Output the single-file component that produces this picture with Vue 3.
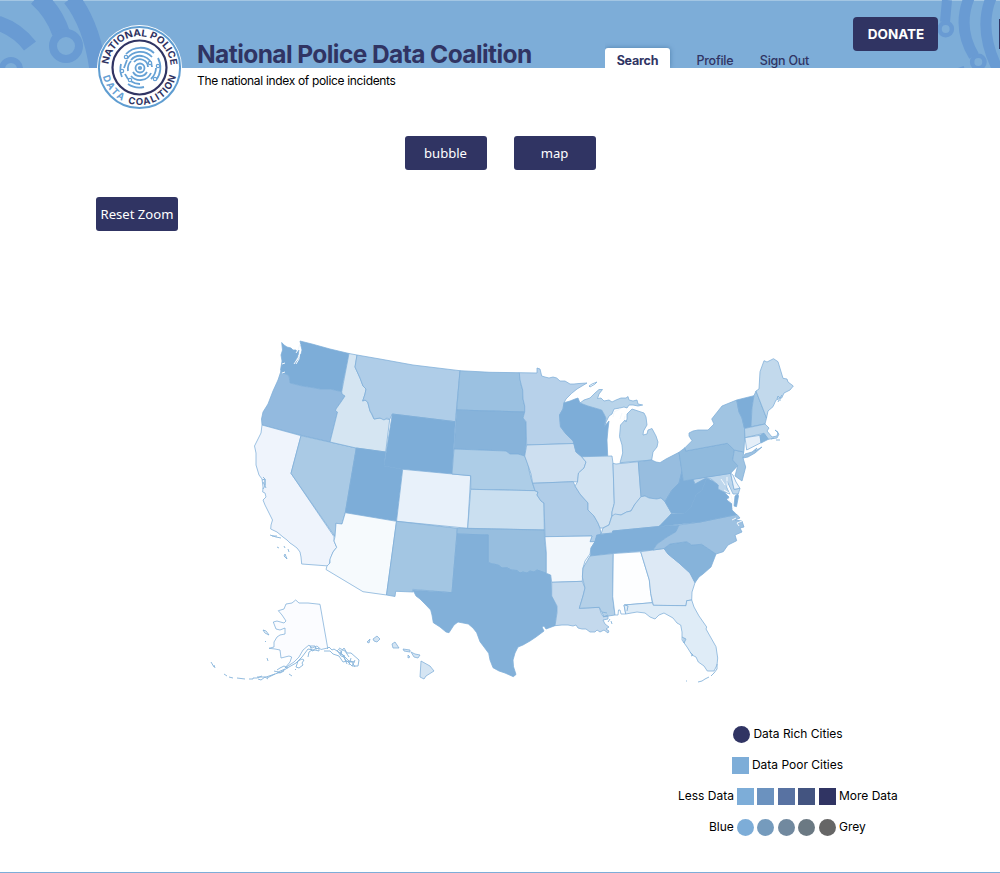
<script setup>
const states = [
  ['WA', '#7dadd8', '281.7,342.5 284,345 287,347 291,348 293,350 296,350 297,352 299,350 298,356 296,360 295,363 298,360 299,356 301,354 302,350 301,346 300,341 312,344 330,349 349,353.5 347,364 343,382 341.7,391.7 330,389 320,389 312,387.5 302,386 298,385 290,383 289,376 286,374 282,373 280.5,370 281,367 282,361 281,355 282.5,350'],
  ['OR', '#93badf', '282,373 286,374 289,376 290,383 298,385 302,386 312,387.5 320,389 330,389 341.7,391.7 342,394 345,396 341,402 336,409 335.5,411 337.5,412 336,418 330,442 300,435 262,425 261.5,419 263,412 268,404 273,391 278,380 281,371'],
  ['CA', '#eff4fc', '262,425 301,435.7 291,473.3 334,536.7 334,541 336.7,547.3 333,552 330,560 329,566 301.7,564 301,557 300,552 297,548 293,545 290,543 287,540 283,537 277,532 270.7,529 271,525 272.5,520 269,513 265,505 263,500 266,497 265,493 262.7,492 263,487 262,479 259,475 256,465 256,453 254.5,446 258,439 261,433'],
  ['NV', '#aacae5', '301,435.7 356.3,448 345.3,512.7 342,524 336,523.3 335,536.7 291,473.3'],
  ['ID', '#d5e5f2', '349,353.5 357,355 355,367 360,378 363,386 366,389 365,394 362.7,401 365,400 367.7,402 370,411 374,419 380,418 389.7,419.5 385.7,452 356,448 330,442 336,418 337.5,412 335.5,411 336,409 341,402 345,396 342,394 341.7,391.7'],
  ['MT', '#afcde8', '357,355 380,359 413,365 460,370.7 455.3,421.7 392.3,414 389.7,419.5 387,418 384,420 380,418 374,419 372,414 370,411 367.7,402 365,400 362.7,401 365,394 366,389 363,386 360,378 355,367'],
  ['WY', '#7dadd8', '392.3,414 455.3,421.7 452,474 402.7,469.3 384,466'],
  ['UT', '#7dadd8', '356.3,448 385.7,452 384,466 402.7,469.3 396.5,521.3 345.3,512.7'],
  ['CO', '#e8f1fa', '402.7,469.3 470.7,475.7 467.7,528.3 396.5,521.3'],
  ['AZ', '#f6fafd', '345.3,512.7 396.5,521.3 386.5,595 363,591.7 326,569.5 327,566 330,563 330,559 333,552 336.7,547.3 334,541 335,536.7 336,523.3 342,524'],
  ['NM', '#a3c6e3', '396.5,521.3 457.3,528.3 452,592.7 412.7,589.3 413.3,592 395.7,591.3 395,596.5 386.5,595'],
  ['ND', '#9bc1e1', '460,370.7 490,372.3 519.3,372.7 520,378 521,385 522.7,390 523,399 524.7,406 524.7,412 456.7,410'],
  ['SD', '#87b3da', '456.7,410 524.7,412 523,418 526,421.7 526,445 524.7,456 518,454 510,454 506,451 454,449'],
  ['NE', '#adcde7', '454,449 506,451 510,454 518,454 524.7,456 528,464 529,470 531.7,481 535,490.7 470.7,489.3 470.7,475.7 452,474'],
  ['KS', '#cadff0', '470.7,489.3 535,490.7 538,492 537,495 541,501 544,503 544.3,530 467.7,528.3'],
  ['OK', '#97bedf', '457.3,528.3 544.3,530 544.5,540 546.3,553 546.3,573.3 540,571 537,570 534,572 530,571 527,573 523,572 520,573 517,570.5 511,570 507,567.7 502,568 499,565.5 495,564.3 492,564 488.3,562.3 488.3,535 457,534'],
  ['TX', '#82b0d9', '457,534 488.3,535 488.3,562.3 492,564 495,564.3 499,565.5 502,568 507,567.7 511,570 517,570.5 520,573 523,572 527,573 530,571 534,572 537,570 540,571 546.3,573.3 550.7,575 551.7,596 554,600 557.5,608 556,617 555,625.7 546,629 544,626 542,627 544,631 536,637 530,641 523,645 518,647 515,653 513,660 513.5,666.7 516,674.5 513.3,676.7 505,673 499,671 493,667.7 490,660 488.7,653.3 484,647 480,641.7 476.7,632.7 473,628 468.3,624 458,622 454,625 449,632.7 446,632 440,627 433.3,622.7 432,615 430.7,610 425,604 420,599 416,596 413,590 452,592.7'],
  ['MN', '#b7d1ea', '519.3,372.7 537,373 537,368 540,369 541.7,376 545,377 549,378 553,377 556.7,378 560,381 565,381 570,384 574,384 579,383.5 587,383 577,389 571.7,393.3 566,399 564,402.7 563,409 559.5,415 560.5,426.7 566,434 573.3,440 574,443.5 526.7,445 526,421.7 523,418 524.7,412 524.7,406 523,399 522.7,390 520,380'],
  ['IA', '#cddff0', '526.7,445 574,443.5 576,452 581.7,456.7 586,462 584,468 578.5,473 577.5,482 573.3,481.7 532.7,483.3 531,474 529,468 524.7,456'],
  ['MO', '#b0cde8', '532.7,483.3 573.3,481.7 575,486 580,494 588,503 588,510 594,516 598,523 600,528 601,534 597,536 595,541.7 590,541.7 592,536 545,536.7 544,503 541,501 537,495 538,492 535,490.7'],
  ['AR', '#f2f7fc', '545,536.7 592,536 590,541.7 595,541.7 591,548 590,554 585,561 583,568 582.3,581.3 551.7,582.3 550.7,575 546.3,573.3 546.3,553'],
  ['LA', '#c4d9ed', '551.7,582.3 582.3,581.3 585,588 583,596 579.3,608.3 599.3,607.3 601,613 603,616.5 608,616 608,619 603,620 605,624 609,627 606,629 609,631 608,633 604,630 600,632 597,630 595,632 590,632 586,629 582,629 578,628 576,625 573,626 568,625 562,625 555,625.7 557,613 557,606 551.7,596'],
  ['WI', '#7dadd8', '564,402.7 570,401 575,399 578,398 580,403 588,406 601.7,410 604,414 606,418 604,426.7 609,421 608,429 607,440 607.7,455.7 581.7,456.7 576,452 573,441 566,434 560.5,426.7 559.5,415 563,409'],
  ['MI', '#b9d4ea', '580,403 584,400 590,398 595,393 599,389.5 602.5,389.5 599,394 597.5,398.5 601,398 604,401 609,400 612,402 616,400 621,398 626,398 628,396.5 629,400 633,401 637,400 638,404 642.7,405 638,406 633,405 629,405 627,408 624,407 620,408 614,409 612,414 609,416 606,422 604.5,426.5 606,418 604,414 601.7,410 588,406'],
  ['MIL', '#b9d4ea', '632,409 638,411 644,413 646,417 647,425 643.5,431 643,435 647,434 648,430 652,428.5 656,436 658,442 657,447 653,452 651.7,460 620,462.7 622.7,453 622,445 619.5,436.7 620.5,425 625,420 626,422 627,419 627,414'],
  ['IL', '#d2e3f2', '581.7,456.7 612,456 613,463.3 614.3,503.3 612,512 611.7,516 609,525 603,528 600,528 598,523 594,516 588,510 588,503 580,494 575,486 577.5,482 578.5,473 584,468 586,462'],
  ['IN', '#cddff0', '613,463.3 616,464 638.3,461.7 641,496.7 637,502 635,504 631,511 626.7,512 621,515 612,516 612,512 614.3,503.3'],
  ['OH', '#97bddf', '638.3,461.7 651.7,460 656,462 660,462.7 666,459 679,452.3 682,471 679,483 672,490 665,501.7 661,498 656.7,499 649,498 645,496 641,496.7'],
  ['KY', '#c8ddef', '641,496.7 645,496 649,498 656.7,499 661,498 665,501.7 671.7,513.3 666,522 659,526.5 612.7,531 612.7,533 601,534 603,528 609,525 612,516 615,514 621,515 626.7,512 631,511 635,504'],
  ['TN', '#80afd9', '596.7,535 612.7,533 612.7,531 659,526.5 679,525 676,531.7 667,537 657,544 653,550 613,553.3 590.5,556 591,548 595,541.7'],
  ['MS', '#b4d0e8', '590,556 613.3,553.5 612.7,596.7 615,615 604,616.7 599.3,607.3 579.3,608.3 583,596 585,588 582.3,577 583,568'],
  ['AL', '#fdfeff', '613.3,553.5 640.7,551.7 649.3,580 650.7,593.3 652.3,602.7 624,605 625.7,614 621,614 620,610 618.5,610 618,615 615,615 612.7,596.7'],
  ['GA', '#dde9f5', '640.7,551.7 664,548.5 668,554 679,563 690,573 695,582.7 692,592 691.7,600 686.7,600.7 686,605.7 653.3,605.3 650.7,593.3 649.3,580'],
  ['FL', '#dfecf7', '624,605 652.3,602.7 653.3,605.3 686,605.7 686.7,600.7 691.7,600 694,607 699,616 706.7,627 706,629 716,646.7 717.7,658 717,665 714,671 707.3,671 704,666 698.3,662 696,657 692,655 687,647 682,640 682,632 680.7,625 677,623 673,618 664,613 659,615 655,619 650,617 645,613 637,612 625.7,614'],
  ['SC', '#86b3da', '664,548.5 670,544 686.7,541.7 691.7,545 701.7,544.3 716,554 711,567 703,574 699,577 695,582.7 690,573 679,563 668,554'],
  ['NC', '#9dc1e1', '679,525 700,522 737,514.5 740,518 735,520 742,521 744,527 740,528 742,532 735,535 736.7,540.7 728,545 723.3,551.7 716,554 701.7,544.3 691.7,545 686.7,541.7 670,544 664,548.5 653,550 657,544 667,537 676,531.7'],
  ['VA', '#7dadd8', '706.7,478.3 713,481 718.3,485 718,489 724,492 729,497 727,500 732,504 732,510 736.7,514.5 700,522 659,526.5 671,514 685,513 691,507 696,495 702,490'],
  ['WV', '#7dadd8', '682,471 683.3,481 693,479 695,484 699,479 706.7,478.3 702,490 696,495 691,507 685,513 671.7,513.3 665,501.7 672,490 679,483'],
  ['MD', '#bdd6ec', '693,479 730.7,473.3 734,489.3 740,488.3 738.3,494 733,494 727,481 727,488 730,494 724,492 718,489 718.3,485 711,479 706,478 695,484'],
  ['VAE', '#7dadd8', '737.7,494 738.5,496 736.5,506.7 734,506 735,496'],
  ['DE', '#edf4fb', '730.7,473.3 733,475 736,482 740,488.3 734,489.3'],
  ['PA', '#90badd', '679,452.3 685,447.7 685.7,451 727.3,443.3 734.3,450 732.7,460 737.7,465.7 730.7,473.3 683.3,481'],
  ['NJ', '#a0c4e2', '734.3,450 743.7,452 743,458 745.7,467 742,481 735,476 737.7,465.7 732.7,460'],
  ['NY', '#a0c4e2', '685.7,451 685,447.7 692,440.7 689,436 689,433 693,431 698,430 708,430 714,424 711.7,419 722,406 736.7,400 739,412 742,418 744.5,428.5 744.5,440 744,450 743.7,452 734.3,450 727.3,443.3'],
  ['LI', '#9dc1e1', '743,458 745,454 752,452 757,448 755,451 762,447 755,453 748,457'],
  ['VT', '#7dadd8', '736.7,400 754,395.7 752,408 751,426.7 744.5,428.5 742,418 739,412'],
  ['NH', '#a4c7e4', '754,395.7 756,391 766.5,418 765,424 751,426.7 752,408'],
  ['ME', '#c2d9ec', '756,391 759,389 760,371.7 764,360.7 767,362 773.5,358.7 778,361.7 783,378.3 787,379 788,382 793.3,386 790,390 784,393 781.7,398 776,400 773,406.7 768,411 766.5,418'],
  ['MA', '#bad4ea', '744.5,428.5 765,424 769,428 767,431 772,437 777,436 778,432 775,430 779,434 777,438 768.3,439.3 764,433.3 745,437.7'],
  ['CT', '#e5eff9', '745,437.7 760,435.3 761,442.7 746.7,450'],
  ['RI', '#85b3da', '760,435.3 764,433.3 768.3,439.3 761,443'],
  ['AK', '#fbfcff', '286,604 292,603 295.7,600 299,603 308,603 320,604.3 327.7,648 321,649.5 317,646 312,648 309,645 303,650 299,657 294,662 285,668 290,662 291.7,657 289,656 285,657 281,658 280,650 275,649 269,648.3 274,647 274,642 277,637 280,635 285,634 285,628 280,630 276,629 273.3,622 277,621 284,623 286,621 282,615 278.3,610.7 284,609']
]
const isles = [
  'M327 649l2-2 3 3 2-1 6 4 4-5 3 5 4 0 8 7-1 6-6 0-5-5-4 1-4-6-6-2-3-3-6 0',
  'M337 650l4 6 3 1 2 4 6 1 3 5m-14-14l8 8 6 1m-12-7l4 9m4-6l-2 7m6-5-3 6m-13-18l6 3 4 6m-11-8 4 3-2 2 5 2',
  'M317 648l-4 2-5-1-6 8-6 6-7 4-8 5-15 5-9 0m31-9-4-2-4 2-3 2m0 2 3 1 4-2m5 3 3 2m-24 3-3-2-4 3-3-1m54-29-3 2-1 5',
  'M310 646l5 0 1 3 3-1 0 3-4-1-3 1zM297 664l1-3 4-2 2 1-2 3 1 2-4 3-3-1zM285 669l-7 3-4-1m1 3-8 4',
  'M262 676l-5 2-4 0 0 1-4 0m-4 0-8-1m-4 0-4-1m-5-3 3 2m-16-14 3 5m0-2 1 3m52-10 1 3m-3-20 1 1M263 630l3 1 3 4-4-2zM295 669l1 1',
  'M270 535l3 1 3 1 5 1m-4-2-5 0m5 11 2 1m5-2 1 2m3 1 1 3m-4 2 2 5-3-3z',
  'M262 480l3-1 0 7-2 3m0-7 3 6m-3-11 2 2 0 6',
  'M589 386l3-2 5-2-2 2-5 3z',
  'M777 399l1-3 2 2 2-3m-4 7 1-2 2 0M771 439l3-1m2 2 4 0',
  'M686 681l1 0m11 1 4-1 3-2 4-2m2-1 3-3 3-4 0-5',
  'M682 637l4 2-2 4 0-5m6 14 3 3-2 1M514 648l1 3m-4 4 2 13M603 617l5-2m2 4-2 3m3-1 1 3M625 605l3 1-1 5M602 612l5 1'
]
const inlets = [
  'M300 344l-2 6-2 3m4-1-1 5-3 4-2 3m5-9 0 4-3 5M282 364l3-1m-3 10 3-1',
  'M727 477l0 8 3 7 2 7 1 9m-9-18 5 3m-8-14 4 6M727 499l5 3',
  'M742 521l-5 2 2 3m-3-8-4 2M620 409l-6 3-1 5m9-4-2 6m5-3-1 4'
]
const hawaii = [
  '367,642 370,639 369,643', '373,639 377,636 380,639 377,642 374,641',
  '392,644 395,642 399,648 393,648', '403,649 410,650 410,652 404,651',
  '411,652 415,654 420,655 418,658 414,657', '408,655 410,657 408,658',
  '421,661 430,666 434,671 426,676 424,679 420,677'
]
const ramp = ['#7dadd8', '#6b92bf', '#5872a2', '#435480', '#303463']
const greys = ['#7dadd8', '#759bbd', '#71899f', '#6b7983', '#666666']
</script>

<template>
  <div class="page">
    <header class="banner">
      <svg class="circuits" viewBox="0 0 1000 68" width="1000" height="68" aria-hidden="true">
        <g fill="none" stroke="#699bd3" stroke-width="11">
          <path d="M-2 23Q18 30 30 46" stroke-width="15" />
          <path d="M37 -3Q54 12 61 33" stroke-width="18" />
          <circle cx="66" cy="46" r="13" stroke-width="8" />
          <path d="M71 -2Q92 25 98 70" stroke-width="17" />
          <circle cx="11" cy="69" r="9" stroke-width="6" />
          <path d="M947 0L945 22" stroke-width="10" />
          <circle cx="945.7" cy="29" r="6.2" stroke-width="4.5" />
          <path d="M969 -2Q957 28 974 56M991 -2Q978 30 998 70" />
          <circle cx="978.3" cy="62" r="6.2" stroke-width="4.5" />
          <path d="M955 70L964 67" stroke-width="2" />
        </g>
      </svg>
      <svg class="seal" viewBox="0 0 86 86" width="86" height="86" role="img">
        <circle cx="42.5" cy="42.5" r="42.5" fill="#fff" />
        <circle cx="42.5" cy="42.5" r="40.6" fill="none" stroke="#5f9dd1" stroke-width="2" />
        <circle cx="42.5" cy="42.5" r="27" fill="none" stroke="#303463" stroke-width="2.2" />
        <defs>
          <path id="arcTop" d="M12.5 51A31.2 31.2 0 1 1 72.5 51" />
          <path id="arcTurn" d="M4.9 42.5A37.6 37.6 0 0 0 80.1 42.5" />
        </defs>
        <text class="seal-text"><textPath href="#arcTop" startOffset="11.5" textLength="93" lengthAdjust="spacingAndGlyphs">NATIONAL POLICE</textPath></text>
        <text class="seal-text seal-light"><textPath href="#arcTurn" startOffset="9" textLength="32">DATA</textPath></text>
        <text class="seal-text"><textPath href="#arcTurn" startOffset="47" textLength="62">COALITION</textPath></text>
        <g fill="none" stroke="#65a1d5" stroke-width="1.8">
          <path d="M29 29A20 20 0 0 1 57 28M61 33A20 20 0 0 1 59 55M47 62A20 20 0 0 1 31 59M25 52A20 20 0 0 1 24 39" />
          <path d="M30 34A16 16 0 0 1 55 32M59 43A16 16 0 0 1 54 54M43 59A16 16 0 0 1 28 49M27 43L30 35" />
          <path d="M34 35A12 12 0 0 1 55 42M54 48A12 12 0 0 1 34 51M31 46A12 12 0 0 1 34 36" />
          <path d="M37 37A8 8 0 0 1 51 42M50 47A8 8 0 0 1 36 47" />
          <circle cx="43" cy="43" r="4.5" /><circle cx="43" cy="43" r="1.2" />
          <g fill="#fff" stroke-width="1.2">
            <circle cx="29" cy="32" r="1.7" /><circle cx="25" cy="46" r="1.7" />
            <circle cx="33" cy="55" r="1.7" /><circle cx="58" cy="54" r="1.7" />
            <circle cx="53" cy="38" r="1.7" /><circle cx="61" cy="41" r="1.7" />
          </g>
        </g>
      </svg>
      <div class="brand">
        <h1>National Police Data Coalition</h1>
        <p>The national index of police incidents</p>
      </div>
      <nav>
        <a class="tab active">Search</a>
        <a class="tab profile">Profile</a>
        <a class="tab signout">Sign Out</a>
      </nav>
      <button class="donate">DONATE</button>
      <span class="edge"></span>
    </header>

    <main>
      <div class="switcher">
        <button class="btn">bubble</button>
        <button class="btn">map</button>
      </div>
      <button class="btn reset">Reset Zoom</button>

      <svg class="map" viewBox="0 311 1000 400" width="1000" height="400">
        <polygon v-for="s in states" :key="s[0]" :points="s[2]" :fill="s[1]" />
        <polygon v-for="h in hawaii" :key="h" :points="h" fill="#d5e5f3" />
        <path v-for="d in inlets" :key="d" class="inlet" :d="d" fill="none" />
        <path v-for="d in isles" :key="d" :d="d" fill="none" />
      </svg>

      <div class="legend">
        <div class="row rich"><i class="dot navy"></i><span>Data Rich Cities</span></div>
        <div class="row poor"><i class="box sky"></i><span>Data Poor Cities</span></div>
        <div class="row less">
          <span class="l-less">Less Data</span>
          <i v-for="c in ramp" :key="c" class="box" :style="{ background: c }"></i>
          <span class="l-more">More Data</span>
        </div>
        <div class="row blue">
          <span class="l-blue">Blue</span>
          <i v-for="c in greys" :key="c" class="dot" :style="{ background: c }"></i>
          <span class="l-grey">Grey</span>
        </div>
      </div>
    </main>
  </div>
</template>

<style>
body { margin: 0; background: #fff; overflow: hidden; }
</style>

<style scoped>
.page {
  box-sizing: border-box; width: 1000px; height: 873px; overflow: hidden;
  border-bottom: 1px solid #7dadd8;
  font-family: Inter, "Liberation Sans", sans-serif; color: #000;
}
.banner {
  position: relative; display: flex; align-items: flex-start; box-sizing: border-box;
  height: 68px; padding-left: 197px; background: #7dadd8; border-top: 1px solid #a3c6e3;
}
.circuits { position: absolute; left: 0; top: -1px; }
.seal { position: absolute; left: 97px; top: 24px; }
.seal-text { font: 700 9.6px Inter, sans-serif; fill: #303463; }
.seal-light { fill: #65a1d5; }
.brand { position: relative; width: 408px; padding-top: 37px; white-space: nowrap; }
h1 { margin: 0; font-size: 24.5px; line-height: 32px; font-weight: 700; color: #303463; letter-spacing: -0.58px; }
p { margin: 3px 0 0; font-size: 12px; line-height: 16px; letter-spacing: -0.33px; }
nav { position: relative; display: flex; align-items: flex-end; height: 67px; width: 248px; color: #303463; overflow: hidden; }
.tab { height: 20px; line-height: 26px; white-space: nowrap; font-size: 12.5px; font-weight: 500; letter-spacing: -0.25px; }
.active { width: 65px; text-align: center; font-weight: 700; letter-spacing: -0.2px; background: #fff; border-radius: 3px 3px 0 0; box-shadow: 0 0 5px #4f7fad; }
.profile { margin-left: 26.5px; }
.signout { margin-left: 26.5px; }
.donate {
  position: relative; width: 85px; height: 34px; margin: 16px 0 0; padding: 0 0 0 1px; border: 0; border-radius: 4px;
  background: #303463; color: #fff; font: 700 13.5px Inter, sans-serif;
}
.edge { position: absolute; right: 0; top: 18px; width: 1px; height: 30px; background: #303463; }
.switcher { display: flex; justify-content: center; gap: 27px; padding: 68px 0 27px; }
.btn {
  width: 82px; height: 34px; padding: 0; border: 0; border-radius: 3px;
  background: #303463; color: #fff; font: 400 13.1px "Noto Sans", sans-serif; white-space: nowrap;
}
.reset { display: block; margin-left: 96px; }
.map { display: block; margin-top: 80px; }
.map polygon { stroke: #7dadd8; stroke-opacity: .75; stroke-width: 1; stroke-linejoin: round; }
.map path { stroke: #86b3da; stroke-width: .9; stroke-linejoin: round; }
.map .inlet { stroke: #f4f8fc; stroke-width: 1; }
.legend { display: flex; flex-direction: column; margin-top: 14px; font-size: 12px; }
.row { display: flex; align-items: center; height: 18px; margin-bottom: 13px; white-space: nowrap; }
.row span { position: relative; top: -1px; }
.dot, .box { width: 17px; height: 17px; flex: none; margin-right: 3.4px; }
.dot { border-radius: 50%; }
.navy { background: #303463; }
.sky { background: #7dadd8; }
.rich { margin-left: 733px; }
.poor { margin-left: 731.5px; }
.less { margin-left: 678px; }
.blue { margin-left: 709px; }
.l-less { width: 59px; }
.l-blue { width: 28px; }
</style>
